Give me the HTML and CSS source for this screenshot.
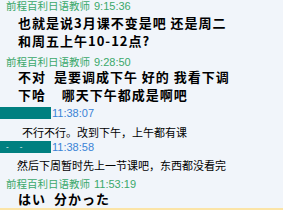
FILE: index.html
```html
<!DOCTYPE html>
<html lang="zh-CN">
<head>
<meta charset="utf-8">
<link rel="stylesheet" href="styles.css">
</head>
<body>
<div class="chat">
  <div class="head h1"><span class="name">前程百利日语教师</span><span class="time">9:15:36</span></div>
  <div class="msg bold b1">也就是说3月课不变是吧&nbsp;还是周二<br>和周五上午10-12点?</div>
  <div class="head h2"><span class="name">前程百利日语教师</span><span class="time">9:28:50</span></div>
  <div class="msg bold b2">不对&nbsp;&nbsp;是要调成下午&nbsp;好的&nbsp;我看下调<br>下哈&nbsp;&nbsp;&nbsp;&nbsp;哪天下午都成是啊吧</div>
  <div class="thead t1"><span class="bar"></span><span class="ttime">11:38:07</span></div>
  <div class="msg plain p1">不行不行。改到下午，上午都有课</div>
  <div class="thead t2"><span class="bar"><span class="dash">-</span><span class="dash">-</span></span><span class="ttime">11:38:58</span></div>
  <div class="msg plain p2">然后下周暂时先上一节课吧，东西都没看完</div>
  <div class="head h3"><span class="name">前程百利日语教师</span><span class="time">11:53:19</span></div>
  <div class="msg bold b3">はい&nbsp;&nbsp;分かった</div>
</div>
</body>
</html>
```
FILE: styles.css
```css
html, body {
  margin: 0;
  padding: 0;
  background: #ffffff;
}
.chat {
  width: 283px;
  height: 208px;
  background: #f1f5fa;
  border-bottom: 2px solid #fbe4a6;
  overflow: hidden;
  font-family: "Noto Sans CJK SC", "Liberation Sans", sans-serif;
}
.head {
  height: 16px;
  line-height: 16px;
  padding-left: 6px;
  color: #3aa86a;
  white-space: nowrap;
}
.h1 { margin-top: -5px; }
.h2 { margin-top: 1px; }
.h3 { margin-top: -1px; }
.name {
  font-size: 10.5px;
}
.time {
  font-family: "Liberation Sans", sans-serif;
  font-size: 11px;
  margin-left: 4px;
}
.msg {
  white-space: nowrap;
  color: #000;
}
.bold {
  font-size: 13px;
  font-weight: 700;
  letter-spacing: 1px;
  line-height: 18px;
  padding-left: 18px;
}
.b1 { margin-top: 3px; }
.b2 { margin-top: 1px; }
.b3 { margin-top: 1px; }
.plain {
  font-size: 11px;
  line-height: 18px;
}
.p1 { padding-left: 22px; margin-top: 2px; }
.p2 { padding-left: 17px; margin-top: 1px; }
.thead {
  height: 16px;
  display: flex;
  align-items: center;
}
.t1 { margin-top: 1px; }
.t2 { margin-top: -2px; }
.bar {
  width: 51px;
  height: 12px;
  background: #008080;
  display: flex;
  align-items: center;
  gap: 11px;
  padding-left: 6px;
  box-sizing: border-box;
}
.dash {
  color: #ffffff;
  font-family: "Liberation Sans", sans-serif;
  font-size: 8px;
  line-height: 8px;
}
.ttime {
  font-family: "Liberation Sans", sans-serif;
  font-size: 11px;
  color: #3a83d6;
  margin-left: 1px;
}
```
